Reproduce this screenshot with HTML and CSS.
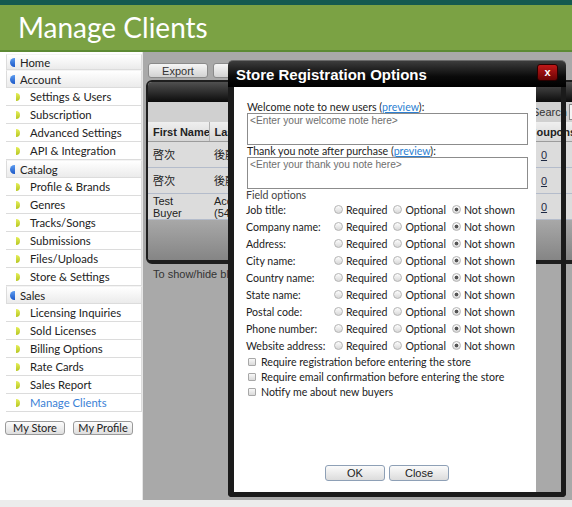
FILE: index.html
```html
<!DOCTYPE html>
<html lang="en">

<head>
    <meta charset="UTF-8">
    <title>Manage Clients</title>
    <link rel="stylesheet" href="styles.css">
</head>

<body>
    <div class="topbar"></div>
    <div class="header">
        <h1>Manage Clients</h1>
    </div>
    <div class="page">
        <div class="sidebar">
            <ul class="menu">
                <li class="group home"><span class="gicon"></span>Home</li>
                <li class="group"><span class="gicon"></span>Account</li>
                <li class="item"><span class="bullet"></span>Settings &amp; Users</li>
                <li class="item"><span class="bullet"></span>Subscription</li>
                <li class="item"><span class="bullet"></span>Advanced Settings</li>
                <li class="item"><span class="bullet"></span>API &amp; Integration</li>
                <li class="group"><span class="gicon"></span>Catalog</li>
                <li class="item"><span class="bullet"></span>Profile &amp; Brands</li>
                <li class="item"><span class="bullet"></span>Genres</li>
                <li class="item"><span class="bullet"></span>Tracks/Songs</li>
                <li class="item"><span class="bullet"></span>Submissions</li>
                <li class="item"><span class="bullet"></span>Files/Uploads</li>
                <li class="item"><span class="bullet"></span>Store &amp; Settings</li>
                <li class="group"><span class="gicon"></span>Sales</li>
                <li class="item"><span class="bullet"></span>Licensing Inquiries</li>
                <li class="item"><span class="bullet"></span>Sold Licenses</li>
                <li class="item"><span class="bullet"></span>Billing Options</li>
                <li class="item"><span class="bullet"></span>Rate Cards</li>
                <li class="item"><span class="bullet"></span>Sales Report</li>
                <li class="item active"><span class="bullet"></span>Manage Clients</li>
            </ul>
            <div class="side-buttons">
                <button class="side-btn">My Store</button>
                <button class="side-btn">My Profile</button>
            </div>
        </div>

        <div class="content">
            <div class="toolbar">
                <button class="btn">Export</button>
                <button class="btn">Import</button>
            </div>
            <div class="grid">
                <div class="grid-head"></div>
                <div class="grid-tools">
                    <span>Search</span>
                    <input class="search-box" type="text">
                </div>
                <table class="clients">
                    <colgroup>
                        <col class="c-first">
                        <col class="c-last">
                        <col class="c-coupon">
                        <col>
                    </colgroup>
                    <thead>
                        <tr>
                            <th class="clip">First Name</th>
                            <th class="clip">Last Name</th>
                            <th>Coupons</th>
                            <th></th>
                        </tr>
                    </thead>
                    <tbody>
                        <tr>
                            <td>啓次</td>
                            <td>後藤</td>
                            <td class="num"><a href="#">0</a></td>
                            <td></td>
                        </tr>
                        <tr>
                            <td>啓次</td>
                            <td>後藤</td>
                            <td class="num"><a href="#">0</a></td>
                            <td></td>
                        </tr>
                        <tr>
                            <td>Test<br>Buyer</td>
                            <td>Account<br>(5481)</td>
                            <td class="num"><a href="#">0</a></td>
                            <td></td>
                        </tr>
                    </tbody>
                </table>
                <div class="grid-foot"></div>
            </div>
            <p class="hint">To show/hide blocked clients use the column menu.</p>
        </div>

        <div class="dialog">
            <div class="dialog-title">
                <span>Store Registration Options</span>
                <button class="dialog-close">x</button>
            </div>
            <div class="dialog-frame">
                <form class="dialog-body">
                    <div class="note-label">Welcome note to new users (<a href="#">preview</a>):</div>
                    <textarea placeholder="<Enter your welcome note here>"></textarea>
                    <div class="note-label">Thank you note after purchase (<a href="#">preview</a>):</div>
                    <textarea placeholder="<Enter your thank you note here>"></textarea>

                    <div class="field-title">Field options</div>
                    <div class="field-row">
                        <span class="field-name">Job title:</span>
                        <label><input type="radio" name="f1">Required</label>
                        <label><input type="radio" name="f1">Optional</label>
                        <label><input type="radio" name="f1" checked>Not shown</label>
                    </div>
                    <div class="field-row">
                        <span class="field-name">Company name:</span>
                        <label><input type="radio" name="f2">Required</label>
                        <label><input type="radio" name="f2">Optional</label>
                        <label><input type="radio" name="f2" checked>Not shown</label>
                    </div>
                    <div class="field-row">
                        <span class="field-name">Address:</span>
                        <label><input type="radio" name="f3">Required</label>
                        <label><input type="radio" name="f3">Optional</label>
                        <label><input type="radio" name="f3" checked>Not shown</label>
                    </div>
                    <div class="field-row">
                        <span class="field-name">City name:</span>
                        <label><input type="radio" name="f4">Required</label>
                        <label><input type="radio" name="f4">Optional</label>
                        <label><input type="radio" name="f4" checked>Not shown</label>
                    </div>
                    <div class="field-row">
                        <span class="field-name">Country name:</span>
                        <label><input type="radio" name="f5">Required</label>
                        <label><input type="radio" name="f5">Optional</label>
                        <label><input type="radio" name="f5" checked>Not shown</label>
                    </div>
                    <div class="field-row">
                        <span class="field-name">State name:</span>
                        <label><input type="radio" name="f6">Required</label>
                        <label><input type="radio" name="f6">Optional</label>
                        <label><input type="radio" name="f6" checked>Not shown</label>
                    </div>
                    <div class="field-row">
                        <span class="field-name">Postal code:</span>
                        <label><input type="radio" name="f7">Required</label>
                        <label><input type="radio" name="f7">Optional</label>
                        <label><input type="radio" name="f7" checked>Not shown</label>
                    </div>
                    <div class="field-row">
                        <span class="field-name">Phone number:</span>
                        <label><input type="radio" name="f8">Required</label>
                        <label><input type="radio" name="f8">Optional</label>
                        <label><input type="radio" name="f8" checked>Not shown</label>
                    </div>
                    <div class="field-row">
                        <span class="field-name">Website address:</span>
                        <label><input type="radio" name="f9">Required</label>
                        <label><input type="radio" name="f9">Optional</label>
                        <label><input type="radio" name="f9" checked>Not shown</label>
                    </div>

                    <label class="check"><input type="checkbox">Require registration before entering the store</label>
                    <label class="check"><input type="checkbox">Require email confirmation before entering the store</label>
                    <label class="check"><input type="checkbox">Notify me about new buyers</label>

                    <div class="dialog-buttons">
                        <button type="button" class="dlg-btn">OK</button>
                        <button type="button" class="dlg-btn">Close</button>
                    </div>
                </form>
            </div>
        </div>
    </div>
    <div class="footer"></div>
</body>

</html>
```

FILE: styles.css
```css
body {
    margin: 0;
    padding: 0;
    font-family: Lato, "Noto Sans", sans-serif;
    background-color: #ececec;
    color: #222;
}

.topbar {
    height: 5px;
    background-color: #145a50;
}

.header {
    height: 45px;
    background-color: #7ba244;
    border-bottom: 2px solid #5d8a34;
}

.header h1 {
    margin: 0;
    padding-left: 18px;
    font-family: Lato, sans-serif;
    font-weight: 400;
    font-size: 28px;
    line-height: 45px;
    color: #fff;
}

.page {
    position: relative;
    display: flex;
    height: 448px;
}

/* left menu */

.sidebar {
    width: 142px;
    background-color: #fff;
    padding-top: 2px;
    box-sizing: border-box;
}

.menu {
    list-style: none;
    margin: 0;
    padding: 0 0 0 6px;
}

.menu li {
    display: flex;
    align-items: center;
    box-sizing: border-box;
    height: 18px;
    font-size: 11.3px;
    border-right: 1px solid #dcdcdc;
}

.group {
    background: linear-gradient(#ffffff, #ebebeb);
    border: 1px solid #dcdcdc;
    border-top-color: #f4f4f4;
}

.group.home {
    height: 16px;
}

.gicon {
    width: 5px;
    height: 9px;
    margin: 0 5px 0 3px;
    border-radius: 5px 0 0 5px;
    background: linear-gradient(#5c9cf0, #1c58c8);
}

.item {
    border-bottom: 1px solid #dcdcdc;
    background-color: #fff;
}

.bullet {
    width: 4px;
    height: 8px;
    margin: 0 10px 0 10px;
    border-radius: 0 4px 4px 0;
    background: linear-gradient(#e6ef5a, #b6c622);
}

.item.active {
    color: #3a7fd6;
}

.side-buttons {
    display: flex;
    gap: 8px;
    margin-top: 9px;
    padding-left: 5px;
}

.side-btn {
    width: 60px;
    height: 14px;
    padding: 0;
    font-family: Lato, sans-serif;
    font-size: 11px;
    line-height: 12px;
    color: #222;
    background: linear-gradient(#fdfdfd, #dedede);
    border: 1px solid #9a9a9a;
    border-radius: 3px;
}

/* client list behind the dialog */

.content {
    flex: 1;
    overflow: hidden;
    background-color: #a9a9a9;
    border-left: 1px solid #e6e6e6;
    padding: 11px 0 0 5px;
    font-family: "Liberation Sans", Arial, "Noto Sans CJK JP", sans-serif;
    font-size: 11px;
}

.toolbar {
    display: flex;
    gap: 5px;
}

.btn {
    width: 60px;
    height: 15px;
    padding: 0;
    font-family: "Liberation Sans", Arial, sans-serif;
    font-size: 11px;
    color: #333;
    background: linear-gradient(#f6f6f6, #d2d2d2);
    border: 1px solid #8a8a8a;
    border-radius: 3px;
}

.grid {
    width: 440px;
    margin: 2px 0 0 -2px;
    border: 2px solid #1e1e1e;
    border-bottom-width: 4px;
    border-radius: 6px;
    overflow: hidden;
    background-color: #dcdcdc;
}

.grid-head {
    height: 20px;
    background: linear-gradient(#505050, #0c0c0c);
}

.grid-tools {
    display: flex;
    align-items: center;
    height: 20px;
    padding-left: 384px;
    background-color: #d0d0d0;
    color: #333;
}

.search-box {
    width: 80px;
    height: 12px;
    margin-left: 2px;
    border: 1px solid #888;
    background-color: #f4f4f4;
}

.clients {
    width: 100%;
    table-layout: fixed;
    border-collapse: collapse;
}

.c-first {
    width: 61px;
}

.c-last {
    width: 318px;
}

.c-coupon {
    width: 34px;
}

.clients th {
    height: 19px;
    padding: 0 0 0 5px;
    text-align: left;
    white-space: nowrap;
    font-weight: bold;
    background: linear-gradient(#efefef, #d6d6d6);
    border-right: 1px solid #b2b2b2;
    border-bottom: 1px solid #9c9c9c;
}

.clients th.clip {
    overflow: hidden;
}

.clients th:nth-child(3) {
    padding-left: 1px;
}

.clients td {
    height: 25px;
    padding: 0 0 0 5px;
    line-height: 12px;
    white-space: nowrap;
    overflow: hidden;
    color: #222;
    border-bottom: 1px solid #b4bccb;
}

.clients td.num {
    padding: 0;
    text-align: center;
}

.clients a {
    color: #1f2a44;
}

.grid-foot {
    height: 40px;
    background: linear-gradient(#a8a8a8, #858585);
}

.hint {
    margin: 3px 0 0 5px;
    line-height: 14px;
    color: #333;
    white-space: nowrap;
}

/* dialog */

.dialog {
    position: absolute;
    left: 228px;
    top: 8px;
    width: 338px;
}

.dialog-title {
    display: flex;
    align-items: center;
    justify-content: space-between;
    height: 27px;
    padding: 0 8px 0 8px;
    box-sizing: border-box;
    border-radius: 5px 5px 0 0;
    border-top: 1px solid #6a6a6a;
    background: linear-gradient(#3c3c3c, #0a0a0a 60%, #000);
    color: #fff;
    font-family: "Liberation Sans", Arial, sans-serif;
    font-weight: bold;
    font-size: 15px;
}

.dialog-close {
    width: 21px;
    height: 17px;
    padding: 0;
    margin-top: -4px;
    font-family: "Liberation Sans", Arial, sans-serif;
    font-weight: bold;
    font-size: 11px;
    color: #fff;
    background: linear-gradient(#c01818, #6a0404);
    border: 1px solid #2a0000;
    border-radius: 3px;
}

.dialog-frame {
    height: 410px;
    box-sizing: border-box;
    border: 5px solid #1b1b1b;
    border-left-width: 6px;
    border-top: none;
    border-radius: 0 0 4px 4px;
}

.dialog-body {
    display: flex;
    flex-direction: column;
    width: 302px;
    height: 405px;
    box-sizing: border-box;
    padding: 14px 0 11px 13px;
    background-color: #fff;
    font-size: 10.6px;
}

.note-label {
    line-height: 12px;
}

.note-label a {
    color: #2d7fd2;
}

.dialog-body textarea {
    width: 281px;
    height: 32px;
    box-sizing: border-box;
    margin: 0;
    padding: 1px 2px;
    resize: none;
    border: 1px solid #8c8c8c;
    font-family: "Liberation Sans", Arial, sans-serif;
    font-size: 10.2px;
}

.dialog-body textarea::placeholder {
    color: #6e6e6e;
}

.field-title {
    line-height: 12px;
    margin-left: -1px;
    color: #444;
}

.field-row {
    display: flex;
    align-items: center;
    height: 17px;
    margin-left: -1px;
}

.field-name {
    width: 88px;
}

.field-row label {
    display: flex;
    align-items: center;
    margin-right: 6px;
}

.field-row input {
    appearance: none;
    width: 9px;
    height: 9px;
    margin: 0 3px 0 0;
    border: 1px solid #b4b4b4;
    border-radius: 50%;
    background: linear-gradient(#fdfdfd, #d8d8d8);
}

.field-row input:checked {
    background: radial-gradient(circle, #555 0, #555 1.6px, transparent 2.2px), linear-gradient(#fdfdfd, #d8d8d8);
}

.check {
    display: flex;
    align-items: center;
    height: 15px;
    margin-left: 1px;
}

.check input {
    appearance: none;
    width: 8px;
    height: 8px;
    margin: 0 5px 0 0;
    border: 1px solid #a8a8a8;
    border-radius: 1px;
    background: linear-gradient(#f8f8f8, #dadada);
}

.dialog-buttons {
    display: flex;
    justify-content: center;
    gap: 4px;
    margin: auto 0 0 -9px;
}

.dlg-btn {
    width: 60px;
    height: 16px;
    padding: 0;
    font-family: "Liberation Sans", Arial, sans-serif;
    font-size: 11px;
    color: #222;
    background: linear-gradient(#fbfbfb, #dcdcdc);
    border: 1px solid #8ea0b6;
    border-radius: 3px;
}

.footer {
    height: 7px;
    background-color: #ececec;
}
```
